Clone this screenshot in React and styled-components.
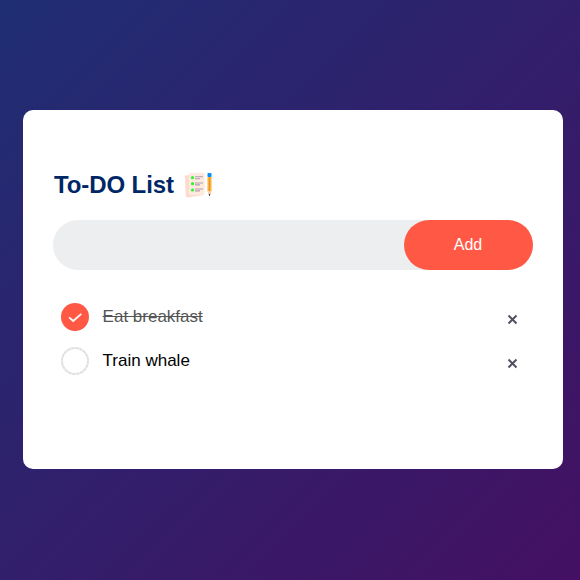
import React, { useState } from "react";
import styled, { createGlobalStyle } from "styled-components";

const GlobalStyle = createGlobalStyle`
  * {
    box-sizing: border-box;
    margin: 0;
    padding: 0;
    font-family: "Liberation Sans", Arial, sans-serif;
  }
`;

const Page = styled.main`
  width: 100%;
  height: 580px;
  padding: 110px 17px 0 23px;
  background: linear-gradient(135deg, #1f2e73, #441063);
`;

const Card = styled.section`
  width: 540px;
  height: 359px;
  padding: 60px 30px 70px;
  background: #fff;
  border-radius: 10px;
`;

const Heading = styled.header`
  display: flex;
  align-items: center;
  height: 30px;
  margin: 0 0 20px 1px;
`;

const Title = styled.h2`
  color: #002765;
  font-size: 24px;
  line-height: 30px;
  letter-spacing: -0.1px;
`;

const NotesIcon = styled.svg`
  width: 30px;
  height: 26px;
  margin-left: 10px;
`;

const EntryBar = styled.form`
  display: flex;
  height: 50px;
  margin-bottom: 25px;
  background: #edeef0;
  border-radius: 30px;
`;

const EntryInput = styled.input`
  flex: 1;
  min-width: 0;
  padding-left: 20px;
  border: none;
  outline: none;
  background: transparent;
  font-size: 14px;
`;

const AddButton = styled.button`
  width: 129px;
  padding-right: 1px;
  border: none;
  border-radius: 40px;
  background: #ff5945;
  color: #fff;
  font-size: 16px;
  line-height: 50px;
  cursor: pointer;
`;

const TaskList = styled.ul`
  list-style: none;
`;

const Task = styled.li`
  display: flex;
  align-items: center;
  height: 44px;
  padding: 0 14px 0 8px;
  cursor: pointer;
`;

const Marker = styled.span`
  flex: none;
  width: 28px;
  height: 28px;
  margin-right: 13.6px;
`;

const Label = styled.span`
  flex: 1;
  font-size: 17px;
  line-height: 20px;
  color: ${({ $done }) => ($done ? "#555" : "#000")};
  text-decoration: ${({ $done }) => ($done ? "line-through" : "none")};
`;

const RemoveButton = styled.button`
  width: 14px;
  height: 14px;
  margin-top: 5px;
  border: none;
  background: none;
  cursor: pointer;
`;

const Drawing = styled.svg`
  display: block;
`;

function Notes() {
  return (
    <NotesIcon viewBox="0 0 30 26" aria-hidden="true">
      <path d="M.8 3.5L16 1.5L20 23L4 25.5Q2 26 1.8 24Z" fill="#fddcd0" />
      <path d="M5 1.5Q5 .7 6 .7H19Q20.7 .7 20.7 2V19Q20.7 23 16 23H7Q5 23 5 21Z" fill="#feeadf" />
      <g fill="#2bf82b">
        <circle cx="8.5" cy="5.7" r="1.6" />
        <circle cx="8.5" cy="11.7" r="1.6" />
        <circle cx="8.5" cy="18" r="1.6" />
      </g>
      <path
        d="M11 4.8H19M11 6.7H16M11 11H19M11 12.9H16M11 17H19M11 18.9H16"
        stroke="#b09daf"
        strokeWidth="1.1"
      />
      <rect x="23.5" y="1" width="4" height="4" rx=".7" fill="#098cf4" />
      <path d="M23.5 5H27.5V19L25.5 24L23.5 19Z" fill="#fbb13b" />
      <path d="M25.5 5.5V19" stroke="#e7962a" strokeWidth="1" />
      <path d="M23.5 19H27.5L25.5 24Z" fill="#f7cfb5" />
      <path d="M24.7 22H26.3L25.5 24.5Z" fill="#392c40" />
    </NotesIcon>
  );
}

function MarkerDrawing({ done }) {
  return (
    <Drawing width="28" height="28" viewBox="0 0 28 28" aria-hidden="true">
      {done ? (
        <>
          <circle cx="14" cy="14" r="14" fill="#ff5945" />
          <path d="M8.1 14.4L12.2 18L20.3 10.8" fill="none" stroke="#fff" strokeWidth="1.7" />
        </>
      ) : (
        <>
          <circle cx="14" cy="14" r="13" fill="#fff" stroke="#e8e8e8" strokeWidth="2" />
          <circle
            cx="14"
            cy="14"
            r="13"
            fill="none"
            stroke="#e0e0e0"
            strokeWidth="1.8"
            strokeDasharray="2.2 1.9"
          />
        </>
      )}
    </Drawing>
  );
}

function Cross() {
  return (
    <Drawing width="14" height="14" viewBox="0 0 14 14" aria-hidden="true">
      <path d="M3.5 2.5L11.5 10.5M11.5 2.5L3.5 10.5" stroke="#555160" strokeWidth="2" />
    </Drawing>
  );
}

export default function App() {
  const [draft, setDraft] = useState("");
  const [tasks, setTasks] = useState([
    { id: 1, text: "Eat breakfast", done: true },
    { id: 2, text: "Train whale", done: false },
  ]);

  const add = (event) => {
    event.preventDefault();
    if (!draft.trim()) return;
    setTasks([...tasks, { id: Date.now(), text: draft, done: false }]);
    setDraft("");
  };
  const toggle = (id) =>
    setTasks(tasks.map((t) => (t.id === id ? { ...t, done: !t.done } : t)));
  const remove = (event, id) => {
    event.stopPropagation();
    setTasks(tasks.filter((t) => t.id !== id));
  };

  return (
    <>
      <GlobalStyle />
      <Page>
        <Card>
          <Heading>
            <Title>To-DO List</Title>
            <Notes />
          </Heading>
          <EntryBar onSubmit={add}>
            <EntryInput value={draft} onChange={(e) => setDraft(e.target.value)} />
            <AddButton>Add</AddButton>
          </EntryBar>
          <TaskList>
            {tasks.map((task) => (
              <Task key={task.id} onClick={() => toggle(task.id)}>
                <Marker>
                  <MarkerDrawing done={task.done} />
                </Marker>
                <Label $done={task.done}>{task.text}</Label>
                <RemoveButton onClick={(e) => remove(e, task.id)}>
                  <Cross />
                </RemoveButton>
              </Task>
            ))}
          </TaskList>
        </Card>
      </Page>
    </>
  );
}
